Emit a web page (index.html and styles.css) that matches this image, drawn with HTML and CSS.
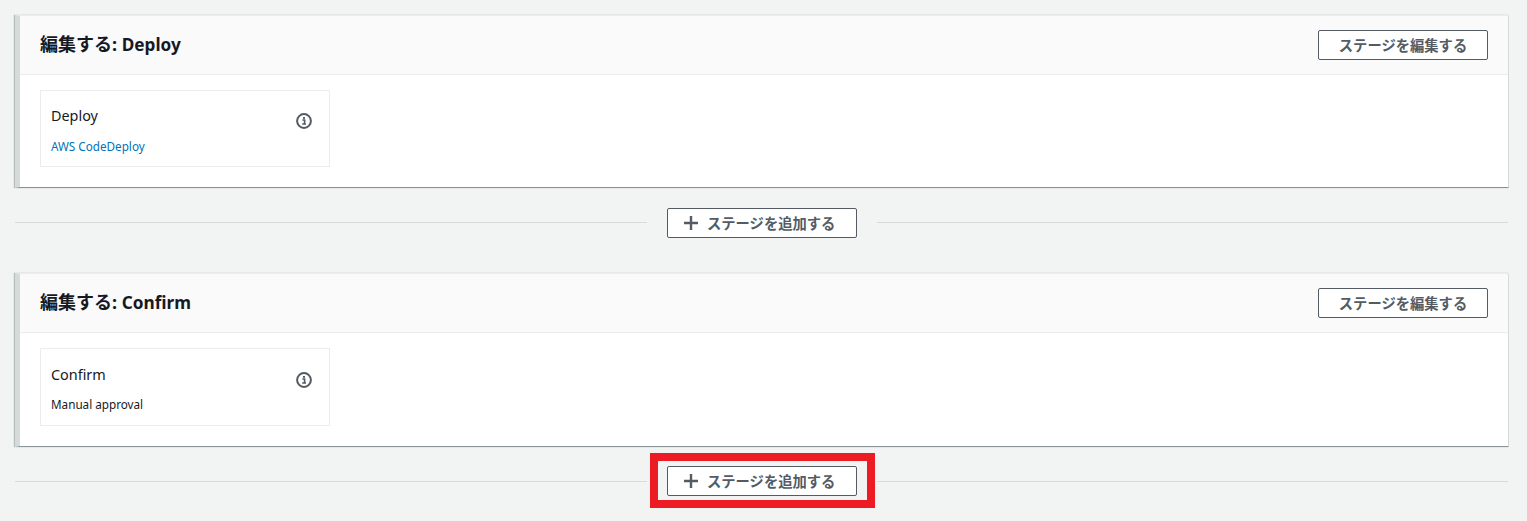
FILE: index.html
```html
<!DOCTYPE html>
<html lang="ja">
<head>
<meta charset="utf-8">
<title>Pipeline</title>
<link rel="stylesheet" href="styles.css">
</head>
<body>
<main class="page">
  <section class="stage">
    <header class="stage-head">
      <h2 class="stage-title">編集する: <span class="latin">Deploy</span></h2>
      <button class="btn btn-edit">ステージを編集する</button>
    </header>
    <div class="stage-body">
      <div class="action">
        <div class="action-text">
          <div class="action-name">Deploy</div>
          <a class="action-provider link">AWS CodeDeploy</a>
        </div>
        <svg class="info" viewBox="0 0 16 16" width="16" height="16" aria-hidden="true">
          <circle cx="8" cy="8" r="6.9" fill="none" stroke="#545b64" stroke-width="2"/>
          <path d="M6.4 7h2.2v3.6M6.2 11h3.8" fill="none" stroke="#545b64" stroke-width="1.6"/>
          <rect x="7" y="4" width="2" height="1.8" fill="#545b64"/>
        </svg>
      </div>
    </div>
  </section>
  <div class="connector">
    <span class="rule rule-left"></span>
    <button class="btn btn-add">
      <svg class="plus" viewBox="0 0 16 16" width="16" height="16" aria-hidden="true"><path d="M8 1v14M1 8h14" stroke="#545b64" stroke-width="2.4" fill="none"/></svg>
      <span class="btn-label">ステージを追加する</span>
    </button>
    <span class="rule"></span>
  </div>
  <section class="stage">
    <header class="stage-head">
      <h2 class="stage-title">編集する: <span class="latin">Confirm</span></h2>
      <button class="btn btn-edit">ステージを編集する</button>
    </header>
    <div class="stage-body">
      <div class="action action-tall">
        <div class="action-text">
          <div class="action-name">Confirm</div>
          <div class="action-provider">Manual approval</div>
        </div>
        <svg class="info" viewBox="0 0 16 16" width="16" height="16" aria-hidden="true">
          <circle cx="8" cy="8" r="6.9" fill="none" stroke="#545b64" stroke-width="2"/>
          <path d="M6.4 7h2.2v3.6M6.2 11h3.8" fill="none" stroke="#545b64" stroke-width="1.6"/>
          <rect x="7" y="4" width="2" height="1.8" fill="#545b64"/>
        </svg>
      </div>
    </div>
  </section>
  <div class="connector connector-last">
    <span class="rule rule-left"></span>
    <button class="btn btn-add">
      <svg class="plus" viewBox="0 0 16 16" width="16" height="16" aria-hidden="true"><path d="M8 1v14M1 8h14" stroke="#545b64" stroke-width="2.4" fill="none"/></svg>
      <span class="btn-label">ステージを追加する</span>
    </button>
    <span class="rule"></span>
    <span class="highlight"></span>
  </div>
</main>
</body>
</html>
```

FILE: styles.css
```css
* { box-sizing: border-box; }
html, body { margin: 0; height: 100%; overflow: hidden; }
body {
  background: #f2f3f3;
  color: #16191f;
  font-family: "Open Sans", "Noto Sans CJK JP", sans-serif;
}
.page { padding: 15px 18px 0 15px; }
.stage {
  background: #fff;
  border-left: 5px solid #d5dbdb;
  border-right: 1px solid #d5dbdb;
  border-bottom: 1px solid #879596;
  border-top: 1px solid #eaeded;
  box-shadow: -1px 0 1px rgba(0,28,36,.25);
}
.stage-head {
  height: 59px;
  background: #fafafa;
  border-bottom: 1px solid #eaeded;
  display: flex;
  align-items: center;
  justify-content: space-between;
  padding: 0 20px;
}
.stage-title {
  margin: 0;
  font-size: 18px;
  line-height: 24px;
  font-weight: 700;
  font-family: "Noto Sans", "Noto Sans CJK JP", sans-serif;
  position: relative;
  top: -1px;
}
.latin { font-size: 17.2px; }
.btn {
  height: 30px;
  background: #fff;
  border: 1px solid #545b64;
  border-radius: 2px;
  color: #545b64;
  font-family: "Noto Sans CJK JP", sans-serif;
  font-size: 14.3px;
  font-weight: 700;
  padding: 0 0 2px;
  display: flex;
  align-items: center;
  justify-content: center;
}
.btn-edit { width: 170px; }
.stage-body { padding: 15px 20px 20px; }
.action {
  width: 290px;
  height: 77px;
  border: 1px solid #eaeded;
  padding: 14px 10px 0;
  display: flex;
  justify-content: space-between;
  align-items: flex-start;
}
.action-tall { height: 78px; padding-top: 15px; }
.action-name { font-size: 14.4px; line-height: 22px; font-family: "Noto Sans", sans-serif; }
.action-provider { display: block; margin-top: 11px; font-size: 11.7px; line-height: 16px; font-family: "Noto Sans", sans-serif; }
.action-tall .action-provider { margin-top: 10px; }
.link { color: #0073bb; }
.info { margin: 8px 7px 0 0; }
.connector {
  height: 85px;
  display: flex;
  align-items: flex-start;
  padding: 20px 1px 0 0;
  gap: 20px;
  position: relative;
}
.connector-last { height: 70px; padding-top: 19px; }
.rule { flex: 1; height: 1px; background: #d5dbdb; margin-top: 14px; }
.rule-left { flex: none; width: 632px; }
.connector-last .rule { margin-top: 15px; }
.btn-add { width: 190px; gap: 8px; justify-content: flex-start; padding-left: 15px; }
.plus { flex: none; position: relative; top: 1px; }
.highlight {
  position: absolute;
  left: 635px;
  top: 6px;
  width: 225px;
  height: 55px;
  border: 8px solid #ed1c24;
}
```
